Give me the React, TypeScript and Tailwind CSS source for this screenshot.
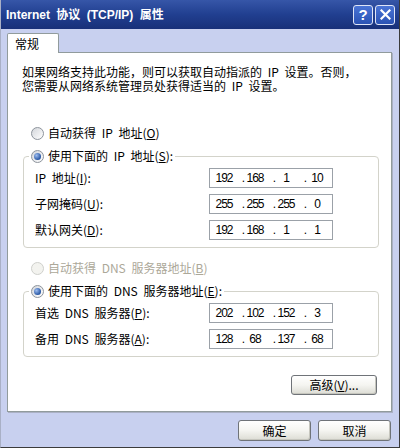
import React from "react";

const cjk = "font-['Noto_Sans_CJK_SC','Noto_Sans',sans-serif]";

function Radio({ checked, disabled }: { checked?: boolean; disabled?: boolean }) {
  return (
    <span
      className={`flex h-[13px] w-[13px] shrink-0 items-center justify-center rounded-full border ${
        disabled ? "border-[#cfd0cc] bg-[#f3f3ef]" : "border-[#8d949c] bg-linear-to-br from-[#d3d6db] to-white"
      }`}
    >
      {checked && (
        <span className="h-[7px] w-[7px] rounded-full bg-[radial-gradient(circle_at_35%_35%,#9dbdf0,#1f4f9e_75%)]" />
      )}
    </span>
  );
}

function RadioRow({ checked, disabled, children }: { checked?: boolean; disabled?: boolean; children: React.ReactNode }) {
  return (
    <label className={`flex h-[14px] items-center gap-[4px] ${disabled ? "text-[#aca899]" : ""}`}>
      <Radio checked={checked} disabled={disabled} />
      <span className="whitespace-nowrap">{children}</span>
    </label>
  );
}

function IpBox({ parts }: { parts: string[] }) {
  return (
    <div className="flex h-[20px] w-[124px] items-center border border-[#9ba1a8] bg-white px-[3px] font-['Liberation_Sans',sans-serif] text-[12px] tracking-[-1px]">
      {parts.map((p, i) => (
        <React.Fragment key={i}>
          <span className="w-[22px] text-center">{p}</span>
          {i < 3 && <span className="w-[9px] text-right">.</span>}
        </React.Fragment>
      ))}
    </div>
  );
}

function Row({ label, parts }: { label: React.ReactNode; parts: string[] }) {
  return (
    <div className="flex items-center">
      <span className="w-[174px] whitespace-nowrap">{label}</span>
      <IpBox parts={parts} />
    </div>
  );
}

function Btn({ children, className }: { children: React.ReactNode; className: string }) {
  return (
    <button
      className={`flex items-center justify-center rounded-[3px] border border-[#6f7378] bg-linear-to-b from-white via-[#f5f5f1] to-[#dcdcd4] shadow-[inset_-1px_-1px_0_#c6c6be] text-[12px] ${className}`}
    >
      {children}
    </button>
  );
}

function TitleBar() {
  return (
    <div className="flex h-[29px] items-center justify-between bg-linear-to-b from-[#3656a8] via-[#213f90] to-[#183079] pl-[5px] pr-[4px]">
      <span className="whitespace-nowrap font-['Liberation_Sans','Noto_Sans_CJK_SC',sans-serif] text-[12px] font-bold text-white">
        Internet 协议 (TCP/IP) 属性
      </span>
      <div className="flex gap-[2px]">
        <span className="flex h-[20px] w-[20px] items-center justify-center rounded-[3px] border border-[#dfe5f7] bg-linear-to-b from-[#4a74d6] to-[#2a52b4] font-['Liberation_Sans',sans-serif] text-[15px] font-bold text-white">
          ?
        </span>
        <span className="flex h-[20px] w-[20px] items-center justify-center rounded-[3px] border border-[#dfe5f7] bg-linear-to-b from-[#4a74d6] to-[#2a52b4]">
          <svg width="11" height="11" viewBox="0 0 11 11">
            <path d="M1.5 1.5 L9.5 9.5 M9.5 1.5 L1.5 9.5" stroke="white" strokeWidth="2.2" strokeLinecap="square" />
          </svg>
        </span>
      </div>
    </div>
  );
}

export default function App() {
  return (
    <div
      className={`flex h-[448px] w-[400px] flex-col border-b border-l border-r border-b-[#3b3b3b] border-l-[#a9b0c6] border-r-[#3b3b3b] bg-[#c8d0ef] ${cjk} text-[12px] leading-[14px] text-black [word-spacing:3px]`}
    >
      <TitleBar />
      <div className="px-[6px] pt-[4px]">
        <div className="relative z-10 flex h-[20px] w-[52px] items-center rounded-t-[2px] border border-b-0 border-[#919b9c] bg-white pl-[7px]">
          常规
        </div>
        <div className="-mt-px h-[360px] w-[385px] border border-[#919b9c] bg-white pl-[14px] shadow-[1px_1px_0_#aab0c4]">
          <div className="mt-[12px] flex flex-col gap-[1px] leading-[13px]">
            <span className="whitespace-nowrap">如果网络支持此功能，则可以获取自动指派的 IP 设置。否则，</span>
            <span className="whitespace-nowrap">您需要从网络系统管理员处获得适当的 IP 设置。</span>
          </div>

          <div className="ml-[9px] mt-[34px]">
            <RadioRow>
              自动获得 IP 地址(<u>O</u>)
            </RadioRow>
          </div>

          <fieldset className="ml-[1px] mt-[9px] w-[356px] rounded-[4px] border border-[#d3d3ca] pb-[7px]">
            <legend className="ml-[5px] px-[2px]">
              <RadioRow checked>
                使用下面的 IP 地址(<u>S</u>):
              </RadioRow>
            </legend>
            <div className="mt-[5px] flex flex-col gap-[6px] pl-[11px]">
              <Row label={<>IP 地址(<u>I</u>):</>} parts={["192", "168", "1", "10"]} />
              <Row label={<>子网掩码(<u>U</u>):</>} parts={["255", "255", "255", "0"]} />
              <Row label={<>默认网关(<u>D</u>):</>} parts={["192", "168", "1", "1"]} />
            </div>
          </fieldset>

          <div className="ml-[9px] mt-[13px]">
            <RadioRow disabled>
              自动获得 DNS 服务器地址(<u>B</u>)
            </RadioRow>
          </div>

          <fieldset className="ml-[1px] mt-[9px] w-[356px] rounded-[4px] border border-[#d3d3ca] pb-[7px]">
            <legend className="ml-[5px] px-[2px]">
              <RadioRow checked>
                使用下面的 DNS 服务器地址(<u>E</u>):
              </RadioRow>
            </legend>
            <div className="mt-[5px] flex flex-col gap-[6px] pl-[11px]">
              <Row label={<>首选 DNS 服务器(<u>P</u>):</>} parts={["202", "102", "152", "3"]} />
              <Row label={<>备用 DNS 服务器(<u>A</u>):</>} parts={["128", "68", "137", "68"]} />
            </div>
          </fieldset>

          <div className="mt-[18px] flex w-[355px] justify-end">
            <Btn className="h-[20px] w-[86px]">
              高级(<u>V</u>)...
            </Btn>
          </div>
        </div>

        <div className="mt-[8px] flex w-[385px] justify-end gap-[7px] pr-[1px]">
          <Btn className="h-[21px] w-[73px]">确定</Btn>
          <Btn className="h-[21px] w-[73px]">取消</Btn>
        </div>
      </div>
    </div>
  );
}
